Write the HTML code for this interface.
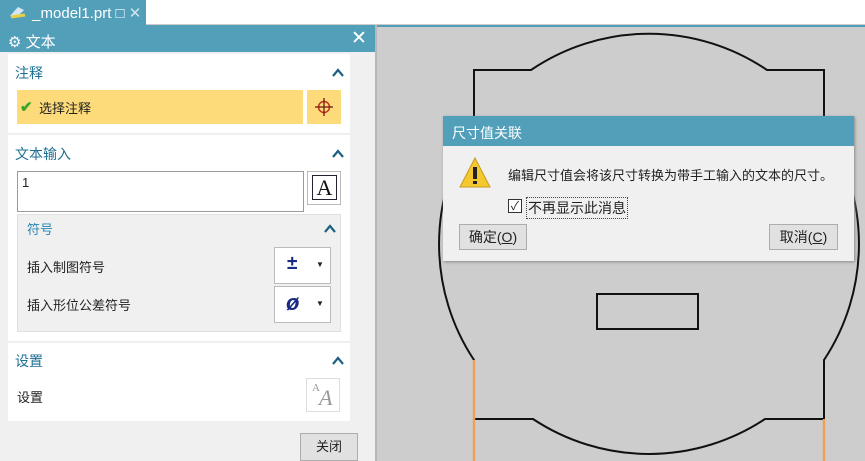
<!DOCTYPE html>
<html><head><meta charset="utf-8"><style>
*{margin:0;padding:0;box-sizing:border-box}
body{width:865px;height:461px;overflow:hidden;position:relative;background:#f0f0f0;font-family:"Liberation Sans","Noto Sans CJK SC",sans-serif;font-size:13px;color:#222}
.a{position:absolute}
.blue{background:#529fba}
.sec{background:#fff}
.hd{color:#1e6f94;font-size:14px}
.btn{background:#e1e1e1;border:1px solid #adadad;text-align:center}
</style></head><body>
<div class="a" style="left:0;top:0;width:865px;height:25px;background:#fff;border-bottom:1px solid #ccc"></div>
<div class="a blue" style="left:0;top:0;width:146px;height:25px"></div>
<div class="a" style="left:8px;top:4px;color:#fff;font-size:15px">
<svg width="20" height="16" style="vertical-align:-2px"><path d="M2 12 L10 3 L16 6 L8 14Z" fill="#d8e4f0"/><path d="M3 13 L17 11" stroke="#e8d040" stroke-width="3"/></svg> _model1.prt <span style="font-weight:bold">&#9633;</span> <span style="color:#cfe5ee">✕</span></div>
<div class="a blue" style="left:0;top:25px;width:377px;height:27px"></div>
<div class="a" style="left:8px;top:31px;color:#fff;font-size:15px">⚙ 文本</div>
<div class="a" style="left:351px;top:27px;color:#fff;font-size:19px">✕</div>
<div class="a" style="left:375px;top:25px;width:2px;height:436px;background:#b8b8b8"></div>
<div class="a" style="left:377px;top:25px;width:488px;height:436px;background:#cdcdcd;border-top:2px solid #529fba"></div>
<svg class="a" style="left:0;top:0" width="865" height="461">
<g fill="none" stroke="#111" stroke-width="2">
<path d="M474 128 L474 70 L531 70 A210 210 0 0 1 767 70 L824 70 L824 128 A210 210 0 0 1 824 360 L824 419 L765 419 A210 210 0 0 1 533 419 L474 419 L474 360 A210 210 0 0 1 474 128"/>
<rect x="597" y="294" width="101" height="35"/>
</g>
<path d="M474 360 V461 M824 419 V461" stroke="#f0a050" stroke-width="2.5"/>
</svg>
<div class="a" style="left:443px;top:116px;width:411px;height:145px;background:#f0f0f0;box-shadow:1px 1px 3px #888"></div>
<div class="a blue" style="left:443px;top:116px;width:411px;height:30px"></div>
<div class="a" style="left:452px;top:123px;color:#fff;font-size:14px">尺寸值关联</div>
<svg class="a" style="left:458px;top:156px" width="34" height="34"><path d="M17 2 L32 31 L2 31Z" fill="#f5c830" stroke="#c89a20"/><rect x="15" y="11" width="4" height="12" fill="#222"/><rect x="15" y="25" width="4" height="3" fill="#222"/></svg>
<div class="a" style="left:508px;top:165px;font-size:13px">编辑尺寸值会将该尺寸转换为带手工输入的文本的尺寸。</div>
<div class="a" style="left:508px;top:199px;width:14px;height:14px;border:1px solid #333;background:#fff;font-size:12px;line-height:12px;text-align:center">✓</div>
<div class="a" style="left:526px;top:197px;font-size:14px;border:1px dotted #444;padding:0 1px">不再显示此消息</div>
<div class="a btn" style="left:459px;top:224px;width:68px;height:26px;line-height:24px;font-size:14px">确定(<u>O</u>)</div>
<div class="a btn" style="left:769px;top:224px;width:69px;height:26px;line-height:24px;font-size:14px">取消(<u>C</u>)</div>
<div class="a sec" style="left:8px;top:54px;width:342px;height:79px"></div>
<div class="a hd" style="left:15px;top:63px">注释</div>
<div class="a" style="left:17px;top:90px;width:286px;height:34px;background:#fddb7a"></div>
<div class="a" style="left:307px;top:90px;width:34px;height:34px;background:#fddb7a"></div>
<svg class="a" style="left:313px;top:96px" width="22" height="22"><circle cx="11" cy="11" r="5.5" fill="none" stroke="#c0301a" stroke-width="1.5"/><path d="M11 2V20M2 11H20" stroke="#6a1a10" stroke-width="1.3"/></svg>
<div class="a" style="left:20px;top:98px;color:#3aa32a;font-size:15px;font-weight:bold">✔</div>
<div class="a" style="left:39px;top:98px">选择注释</div>
<div class="a sec" style="left:8px;top:135px;width:342px;height:206px"></div>
<div class="a hd" style="left:15px;top:144px">文本输入</div>
<div class="a" style="left:17px;top:171px;width:287px;height:41px;border:1px solid #9a9a9a;background:#fff;padding:3px 4px">1</div>
<div class="a" style="left:307px;top:171px;width:34px;height:34px;border:1px solid #bbb;background:#fff"></div>
<div class="a" style="left:312px;top:175px;width:25px;height:25px;border:1px solid #223;font-family:'Liberation Serif',serif;font-size:22px;line-height:24px;text-align:center;color:#111">A</div>
<div class="a" style="left:17px;top:214px;width:324px;height:118px;background:#f0f0f0;border:1px solid #e0e0e0"></div>
<div class="a hd" style="left:27px;top:219px;font-size:13px;color:#2a86b4">符号</div>
<div class="a" style="left:27px;top:257px">插入制图符号</div>
<div class="a" style="left:27px;top:295px">插入形位公差符号</div>
<div class="a" style="left:274px;top:247px;width:57px;height:37px;border:1px solid #bbb;background:#fff"></div>
<div class="a" style="left:274px;top:286px;width:57px;height:37px;border:1px solid #bbb;background:#fff"></div>
<div class="a" style="left:287px;top:253px;color:#1a2a80;font-size:19px;font-weight:bold">±</div>
<div class="a" style="left:286px;top:290px;color:#1a2a80;font-size:22px;font-style:italic;font-weight:bold">ø</div>
<div class="a" style="left:316px;top:260px;font-size:8px">▼</div>
<div class="a" style="left:316px;top:299px;font-size:8px">▼</div>
<div class="a sec" style="left:8px;top:343px;width:342px;height:78px"></div>
<div class="a hd" style="left:15px;top:351px">设置</div>
<div class="a" style="left:17px;top:387px">设置</div>
<div class="a" style="left:306px;top:378px;width:34px;height:34px;border:1px solid #ddd;background:#fff;color:#999;font-family:'Liberation Serif',serif"><span style="position:absolute;left:5px;top:3px;font-size:11px">A</span><span style="position:absolute;left:12px;top:6px;font-size:22px;font-style:italic">A</span></div>
<div class="a btn" style="left:300px;top:433px;width:58px;height:28px;line-height:26px;font-size:13px">关闭</div>
<svg class="a" style="left:0;top:0" width="360" height="400">
<g fill="none" stroke="#1e6080" stroke-width="2.2">
<path d="M333 76 L338 70 L343 76"/>
<path d="M333 157 L338 151 L343 157"/>
<path d="M325 232 L330 226 L335 232"/>
<path d="M333 364 L338 358 L343 364"/>
</g>
</svg>
</body></html>
